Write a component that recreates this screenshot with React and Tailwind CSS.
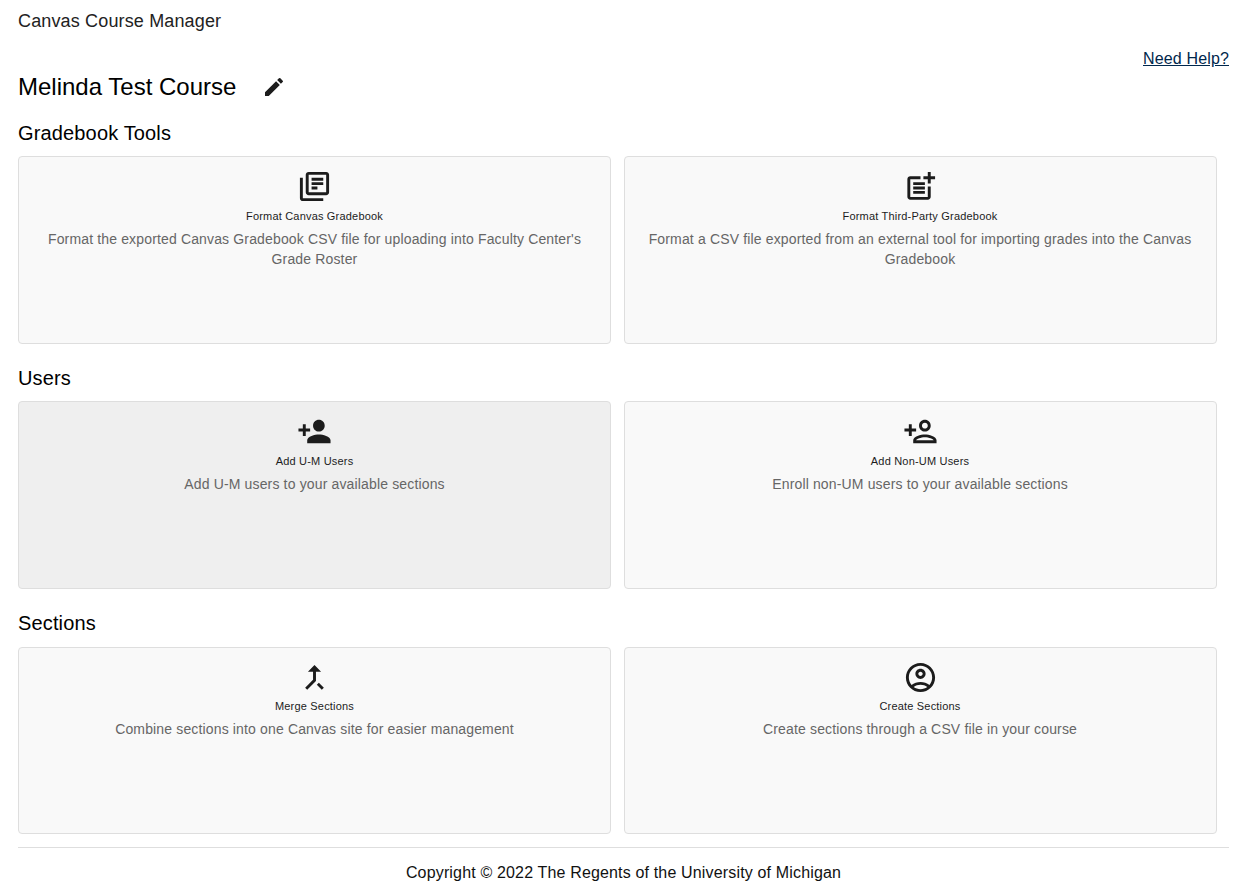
import React from 'react';

const ICONS = {
  edit: 'M3 17.25V21h3.75L17.81 9.94l-3.75-3.75L3 17.25zM20.71 7.04a.9959.9959 0 0 0 0-1.41l-2.34-2.34a.9959.9959 0 0 0-1.41 0l-1.83 1.83 3.75 3.75 1.83-1.83z',
  books: 'M4 6H2v14c0 1.1.9 2 2 2h14v-2H4V6zm16-4H8c-1.1 0-2 .9-2 2v12c0 1.1.9 2 2 2h12c1.1 0 2-.9 2-2V4c0-1.1-.9-2-2-2zm0 14H8V4h12v12zM10 9h8v2h-8zm0 3h4v2h-4zm0-6h8v2h-8z',
  postAdd: 'M17 19.22H5V7h7V5H5c-1.1 0-2 .9-2 2v12c0 1.1.9 2 2 2h12c1.1 0 2-.9 2-2v-7h-2v7.22zM19 2h-2v3h-3c.01.01 0 2 0 2h3v2.99c.01.01 2 0 2 0V7h3V5h-3V2zM7 9h8v2H7zM7 12v2h8v-2h-3zM7 15h8v2H7z',
  personAdd: 'M15 12c2.21 0 4-1.79 4-4s-1.79-4-4-4-4 1.79-4 4 1.79 4 4 4zm-9-2V7H4v3H1v2h3v3h2v-3h3v-2H6zm9 4c-2.67 0-8 1.34-8 4v2h16v-2c0-2.66-5.33-4-8-4z',
  personAddOutline: 'M15 12c2.21 0 4-1.79 4-4s-1.79-4-4-4-4 1.79-4 4 1.79 4 4 4zm0-6c1.1 0 2 .9 2 2s-.9 2-2 2-2-.9-2-2 .9-2 2-2zm0 8c-2.67 0-8 1.34-8 4v2h16v-2c0-2.66-5.33-4-8-4zm-6 4c.22-.72 3.31-2 6-2 2.7 0 5.8 1.29 6 2H9zm-3-3v-3h3v-2H6V7H4v3H1v2h3v3h2z',
  merge: 'M17 20.41 18.41 19 15 15.59 13.59 17 17 20.41zM7.5 8H11v5.59L5.59 19 7 20.41l6-6V8h3.5L12 3.5 7.5 8z',
  account: 'M12 2C6.48 2 2 6.48 2 12s4.48 10 10 10 10-4.48 10-10S17.52 2 12 2zM7.35 18.5C8.66 17.56 10.26 17 12 17s3.34.56 4.65 1.5c-1.31.94-2.91 1.5-4.65 1.5s-3.34-.56-4.65-1.5zm10.79-1.38C16.45 15.8 14.32 15 12 15s-4.45.8-6.14 2.12C4.7 15.73 4 13.95 4 12c0-4.42 3.58-8 8-8s8 3.58 8 8c0 1.95-.7 3.73-1.86 5.12zM12 6c-1.93 0-3.5 1.57-3.5 3.5S10.07 13 12 13s3.5-1.57 3.5-3.5S13.93 6 12 6zm0 5c-.83 0-1.5-.67-1.5-1.5S11.17 8 12 8s1.5.67 1.5 1.5S12.83 11 12 11z',
};

const SECTIONS = [
  {
    name: 'Gradebook Tools',
    cards: [
      { icon: 'books', title: 'Format Canvas Gradebook', text: "Format the exported Canvas Gradebook CSV file for uploading into Faculty Center's Grade Roster" },
      { icon: 'postAdd', title: 'Format Third-Party Gradebook', text: 'Format a CSV file exported from an external tool for importing grades into the Canvas Gradebook' },
    ],
  },
  {
    name: 'Users',
    cards: [
      { icon: 'personAdd', title: 'Add U-M Users', text: 'Add U-M users to your available sections', hover: true },
      { icon: 'personAddOutline', title: 'Add Non-UM Users', text: 'Enroll non-UM users to your available sections' },
    ],
  },
  {
    name: 'Sections',
    cards: [
      { icon: 'merge', title: 'Merge Sections', text: 'Combine sections into one Canvas site for easier management' },
      { icon: 'account', title: 'Create Sections', text: 'Create sections through a CSV file in your course' },
    ],
  },
];

const Icon = ({ name, className }) => (
  <svg viewBox="0 0 24 24" fill="currentColor" className={className}>
    <path d={ICONS[name]} />
  </svg>
);

const ToolCard = ({ icon, title, text, hover }) => (
  <div className={`h-[187.67px] rounded border border-[#dedede] px-[16px] pt-[12.2px] text-center ${hover ? 'bg-[#efefef]' : 'bg-[#f9f9f9]'}`}>
    <Icon name={icon} className="mx-auto h-[35px] w-[35px] text-[#1c1c1c]" />
    <div className="mt-[3.5px] text-[11px] leading-[16px] tracking-[0.19px] text-[#1c1c1c]">{title}</div>
    <p className="mt-[5px] text-[14px] leading-[20px] tracking-[0.15px] text-[#666666]">{text}</p>
  </div>
);

export default function App() {
  return (
    <div className="h-[887px] overflow-hidden bg-white pl-[18px] pr-[28px] font-['Liberation_Sans',Arial,sans-serif]">
      <div className="pt-[10px] text-[18px] leading-[22px] tracking-[0.15px] text-[#222222]">Canvas Course Manager</div>
      <div className="mt-[17px] flex justify-end">
        <a href="#help" className="text-[16px] leading-[20px] tracking-[0.15px] text-[#00274c] underline">Need Help?</a>
      </div>
      <div className="mt-[7.33px] flex h-[22px] items-center">
        <h1 className="text-[24px] leading-[24px] text-black">Melinda Test Course</h1>
        <Icon name="edit" className="ml-[26px] h-[24px] w-[24px] text-[#1c1c1c]" />
      </div>
      {SECTIONS.map((section) => (
        <section key={section.name}>
          <h2 className="mt-[22.37px] h-[24px] text-[20px] leading-[24px] tracking-[0.15px] text-black">{section.name}</h2>
          <div className="mt-[11.3px] grid grid-cols-[593px_593px] gap-x-[12.5px]">
            {section.cards.map((card) => (
              <ToolCard key={card.title} {...card} />
            ))}
          </div>
        </section>
      ))}
      <footer className="mt-[13px] border-t border-[#dedede] pt-[15px] text-center text-[16px] leading-[20px] tracking-[0.16px] text-[#111111]">
        Copyright © 2022 The Regents of the University of Michigan
      </footer>
    </div>
  );
}
